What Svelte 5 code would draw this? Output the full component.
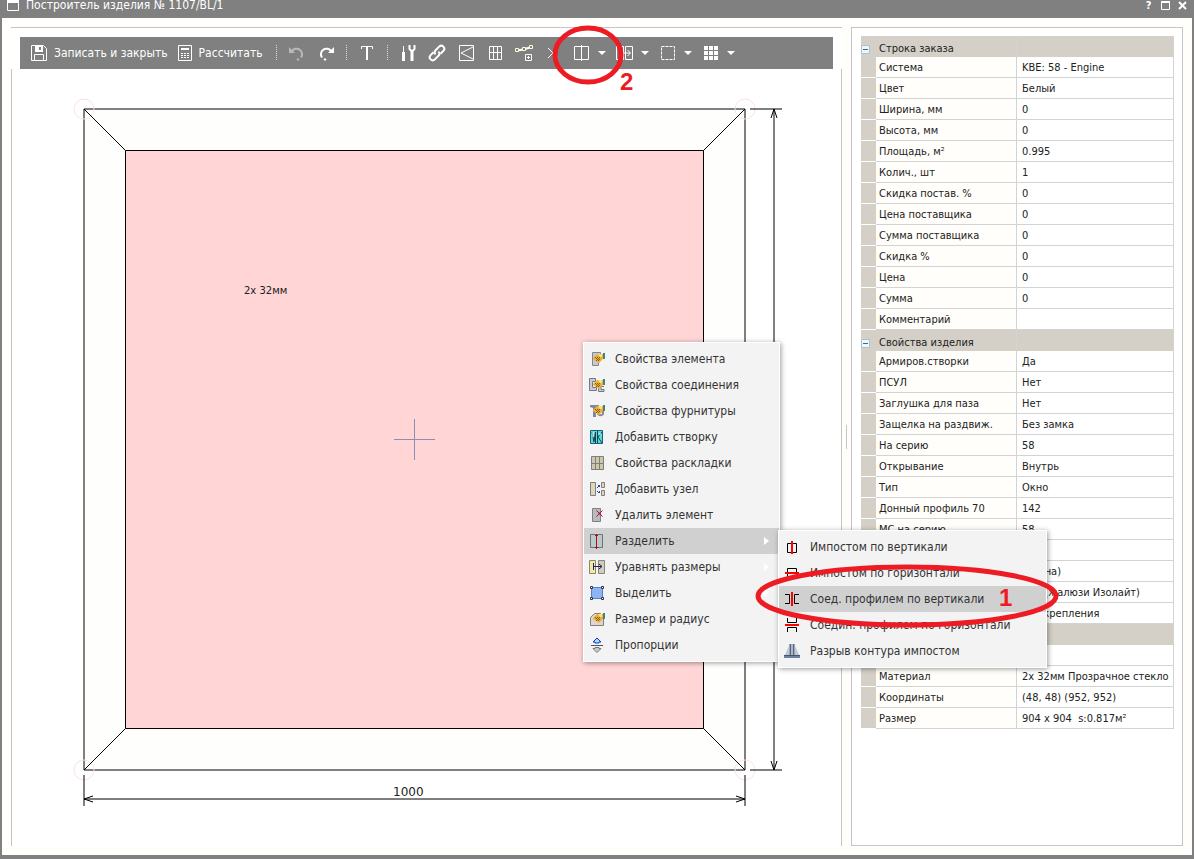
<script>
  const sections = [
    {
      title: 'Строка заказа',
      rows: [
        ['Система', 'KBE: 58 - Engine'],
        ['Цвет', 'Белый'],
        ['Ширина, мм', '0'],
        ['Высота, мм', '0'],
        ['Площадь, м²', '0.995'],
        ['Колич., шт', '1'],
        ['Скидка постав. %', '0'],
        ['Цена поставщика', '0'],
        ['Сумма поставщика', '0'],
        ['Скидка %', '0'],
        ['Цена', '0'],
        ['Сумма', '0'],
        ['Комментарий', '']
      ]
    },
    {
      title: 'Свойства изделия',
      rows: [
        ['Армиров.створки', 'Да'],
        ['ПСУЛ', 'Нет'],
        ['Заглушка для паза', 'Нет'],
        ['Защелка на раздвиж.', 'Без замка'],
        ['На серию', '58'],
        ['Открывание', 'Внутрь'],
        ['Тип', 'Окно'],
        ['Донный профиль 70', '142'],
        ['МС на серию', '58'],
        ['', ''],
        ['', '(Стена)'],
        ['', 'Нет (жалюзи Изолайт)'],
        ['', 'Без крепления']
      ]
    },
    {
      title: '',
      rows: [
        ['', ''],
        ['Материал', '2х 32мм Прозрачное стекло'],
        ['Координаты', '(48, 48) (952, 952)'],
        ['Размер', '904 x 904  s:0.817м²']
      ]
    }
  ];

  const menu = [
    { icon: 'element', label: 'Свойства элемента' },
    { icon: 'joint', label: 'Свойства соединения' },
    { icon: 'hardware', label: 'Свойства фурнитуры' },
    { icon: 'sash', label: 'Добавить створку' },
    { icon: 'layout', label: 'Свойства раскладки' },
    { icon: 'node', label: 'Добавить узел' },
    { icon: 'remove', label: 'Удалить элемент' },
    { icon: 'split', label: 'Разделить', sub: true, active: true },
    { icon: 'equal', label: 'Уравнять размеры', sub: true },
    { icon: 'select', label: 'Выделить', sub: true },
    { icon: 'radius', label: 'Размер и радиус' },
    { icon: 'ratio', label: 'Пропорции' }
  ];

  const submenu = [
    { icon: 'impV', label: 'Импостом по вертикали' },
    { icon: 'impH', label: 'Импостом по горизонтали' },
    { icon: 'profV', label: 'Соед. профилем по вертикали', active: true },
    { icon: 'profH', label: 'Соедин. профилем по горизонтали' },
    { icon: 'break', label: 'Разрыв контура импостом' }
  ];

  const tools = ['tools', 'link', 'flap', 'grid', 'nodes', 'cross'];
  const dropdowns = ['halves', 'equalize', 'marquee', 'tiles'];
  const names = {
    tools: 'Фурнитура', link: 'Соединение', flap: 'Створка', grid: 'Раскладка', nodes: 'Узел', cross: 'Удалить',
    halves: 'Разделить', equalize: 'Уравнять', marquee: 'Выделить', tiles: 'Сетка'
  };
</script>

{#snippet hand()}
  <path d="M4 7l4-4h6v5l-4 4-6-4z" fill="#e9b13c" />
  <path d="M6 6h1v1H6zM8 6h1v1H8zM7 7h1v1H7zM9 7h1v1H9zM8 8h1v1H8zM10 8h1v1h-1zM7 9h1v1H7zM9 9h1v1H9zM10 6h1v1h-1z" fill="#8a5c10" />
  <path d="M9 3h4v3h-2z" fill="#fbe27a" />
  <path d="M14 2h2v6h-2z" fill="#3d8580" />
{/snippet}

{#snippet toolIcon(name)}
  <svg width="20" height="18" viewBox="0 0 20 18" fill="none" stroke="#fff" aria-hidden="true">
    {#if name === 'tools'}
      <path d="M5.500 2v7" stroke-width="1" />
      <path d="M5.500 8v9" stroke-width="3" />
      <path d="M14 7v10" stroke-width="3" />
      <path d="M11.500 1v4l2 2h1l2-2V1" stroke-width="2" />
    {:else if name === 'link'}
      <g transform="rotate(-45 10 9)" stroke-width="2">
        <path d="M8 6H4a3 3 0 0 0 0 6h5a3 3 0 0 0 3-3" />
        <path d="M12 12h4a3 3 0 0 0 0-6h-5a3 3 0 0 0-3 3" />
      </g>
    {:else if name === 'flap'}
      <path d="M3.500 1.500h14v15h-14zM17 3L5 9l12 6" />
    {:else if name === 'grid'}
      <path d="M4.500 2.500h12v13h-12zM8.500 3v12M12.500 3v12M5 8.500h11" />
    {:else if name === 'nodes'}
      <path d="M3 6.500l6-1 7-2" stroke-width="2" />
      <path d="M1.500 4.500h3v3h-3zM8.500 3.500h3v3h-3zM15.500 1.500h3v3h-3z" fill="#808080" stroke="#fffbd0" />
      <path d="M11.500 10.500h6v6h-6zM14.500 12v3M13 13.500h3" />
    {:else if name === 'cross'}
      <path d="M5 4l10 10M15 4L5 14" stroke-width="1" />
    {:else if name === 'halves'}
      <path d="M2.500 2.500h14v13h-14zM9.500 1v16" />
    {:else if name === 'equalize'}
      <path d="M1.500 2.500h7v13h-7zM10.500 2.500h7v13h-7zM4 9h11M12.500 6l3 3-3 3" />
    {:else if name === 'marquee'}
      <rect x="3.500" y="2.500" width="13" height="13" stroke-dasharray="3 1" />
    {:else if name === 'tiles'}
      <path d="M3 2h4v4H3zM8 2h4v4H8zM13 2h4v4h-4zM3 7h4v4H3zM8 7h4v4H8zM13 7h4v4h-4zM3 12h4v4H3zM8 12h4v4H8zM13 12h4v4h-4z" fill="#fff" stroke="none" />
    {/if}
  </svg>
{/snippet}

{#snippet menuIcon(name)}
  <svg width="16" height="16" viewBox="0 0 16 16" fill="none" aria-hidden="true">
    {#if name === 'element'}
      <path d="M3.500 1.500h8v4h-2v9h-6z" fill="#c6c8cc" stroke="#84868c" />
      {@render hand()}
    {:else if name === 'joint'}
      <path d="M6.500 4.500V1.500H.500v12h7v-3H3.500v-6z" fill="#c9cad4" stroke="#74768a" />
      <path d="M15 9.500H9.500v5H15v-2h-3v-3" fill="#c9cad4" stroke="#74768a" />
      {@render hand()}
    {:else if name === 'hardware'}
      <path d="M1 2h9v3H7v9H4V5L1 4z" fill="#85859b" />
      <path d="M9 8v3a3 3 0 0 0 5 0V8" stroke="#85859b" stroke-width="2" />
      {@render hand()}
    {:else if name === 'sash'}
      <path d="M1.500 1.500h12v13h-12z" fill="#62d5dc" stroke="#17616e" />
      <path d="M3 3l2 10L6.500 3v11M8.500 2v12M13 3L9 8l4 6" stroke="#0c4553" />
      <path d="M4 3v5M11 4v2" stroke="#fff" />
    {:else if name === 'layout'}
      <path d="M2.500 1.500h12v13h-12z" fill="#cfc6ae" stroke="#7f7e78" />
      <path d="M6.500 2v12M10.500 2v12M3 8.500h11" stroke="#7f7e78" />
    {:else if name === 'node'}
      <path d="M1.500 1.500h5v13h-5zM12.500 1.500h3v5h-3zM12.500 9.500h3v5h-3z" fill="#ddd5c0" stroke="#827f78" />
      <path d="M9 4h2v2H9zM8 6h1v1H8zM8 10h1v1H8zM9 11h2v1H9zM10 10h1v1h-1z" fill="#1b4bb8" />
    {:else if name === 'remove'}
      <path d="M3.500 1.500h8v13h-8z" fill="#b9babd" stroke="#7f8185" />
      <path d="M7.500 3.500l6 6M13.500 3.500l-6 6" stroke="#b80d43" stroke-width="1" />
      <path d="M9.500 5.500h2v2h-2z" fill="#b80d43" />
    {:else if name === 'split'}
      <path d="M1.500 1.500h12v13h-12z" fill="#b8caca" stroke="#677674" />
      <path d="M7.500 1v15M6 2.500h3M6 14.500h3" stroke="#c40016" />
    {:else if name === 'equal'}
      <path d="M.500 1.500h6v13h-6z" fill="#f4e7a0" stroke="#8b8574" />
      <path d="M9.500 1.500h6v13h-6z" fill="#d3cdbd" stroke="#8b8574" />
      <path d="M4.500 4v7M5 7.500h8M10 5l3 2.500L10 10" stroke="#1e2172" />
    {:else if name === 'select'}
      <path d="M2.500 2.500h11v11h-11z" fill="#8db5f2" stroke="#5580cd" />
      <path d="M1.500 1.500h2v2h-2zM12.500 1.500h2v2h-2zM1.500 12.500h2v2h-2zM12.500 12.500h2v2h-2z" fill="#fff" stroke="#333" />
    {:else if name === 'radius'}
      <path d="M1.500 14.500v-8l4-4h6l3 3v9z" fill="#ddd6d0" stroke="#857f7c" />
      {@render hand()}
    {:else if name === 'ratio'}
      <path d="M8 1l4 4h-2v1H6V5H4z" fill="#a7dcff" stroke="#0b3ac9" />
      <path d="M2 8.500h12" stroke="#555" />
      <path d="M6 10.500h4v1h2l-4 4-4-4h2z" fill="#ccc" stroke="#777" />
    {:else if name === 'impV'}
      <path d="M3.500 4.500h9v9h-9z" stroke="#000" />
      <path d="M8 2v13" stroke="#f00" stroke-width="2" />
    {:else if name === 'impH'}
      <path d="M3.500 3.500h9v9h-9z" stroke="#000" />
      <path d="M1 8h14" stroke="#f00" stroke-width="2" />
    {:else if name === 'profV'}
      <path d="M1 3.500h4.500v9H1M15 3.500h-4.500v9H15" stroke="#000" />
      <path d="M8 1v14" stroke="#f00" stroke-width="2" />
    {:else if name === 'profH'}
      <path d="M3.500 1v4.500h9V1M3.500 15v-4.500h9V15" stroke="#000" />
      <path d="M1 8h14" stroke="#f00" stroke-width="2" />
    {:else if name === 'break'}
      <path d="M5 3v9H1zM11 3v9h4z" fill="#bac6d6" />
      <path d="M6.500 1v12M9.500 1v12" stroke="#53647e" stroke-width="2" />
      <path d="M8 1v12" stroke="#bac6d6" />
      <path d="M0 13.500h16" stroke="#6d7fa5" stroke-width="3" />
      <path d="M0 12.500h16" stroke="#46546f" />
    {/if}
  </svg>
{/snippet}

{#snippet menuList(items, label)}
  <ul class="menu-list" role="menu" aria-label={label}>
    {#each items as item}
      <li role="none">
        <button class="menu-item" class:active={item.active} role="menuitem">
          {@render menuIcon(item.icon)}
          <span>{item.label}</span>
          {#if item.sub}
            <svg class="more" width="5" height="8" viewBox="0 0 5 8" aria-hidden="true"><path d="M0 0l5 4-5 4z" fill="#fff" /></svg>
          {/if}
        </button>
      </li>
    {/each}
  </ul>
{/snippet}

<div class="window">
  <header class="titlebar">
    <svg width="12" height="11" viewBox="0 0 12 11" aria-hidden="true">
      <path d="M.500 0v10.500h11V0" fill="none" stroke="#fff" /><path d="M0 0h12v3H0z" fill="#fff" />
    </svg>
    <h1>Построитель изделия № 1107/BL/1</h1>
    <button class="win" aria-label="Справка">?</button>
    <button class="win" aria-label="Развернуть">
      <svg width="9" height="9" viewBox="0 0 9 9"><path d="M.500 1v7.500h8V1" fill="none" stroke="#fff" /><path d="M0 1h9" stroke="#fff" stroke-width="2" /></svg>
    </button>
    <button class="win" aria-label="Закрыть">
      <svg width="9" height="9" viewBox="0 0 9 9"><path d="M1 1l7 7M8 1L1 8" stroke="#fff" stroke-width="2" /></svg>
    </button>
  </header>

  <div class="body">
    <main class="editor">
      <div class="toolbar" role="toolbar" aria-label="Инструменты">
        <button class="text-tool">
          <svg width="16" height="16" viewBox="0 0 16 16" fill="none" stroke="#fff" aria-hidden="true">
            <path d="M.500.500h12l3 3v12H.500z" />
            <path d="M4 1h8v6H4z" fill="#fff" stroke="none" /><path d="M8 2h2v3H8z" fill="#808080" stroke="none" />
            <path d="M3.500 15V9.500h9V15" />
          </svg>
          <span>Записать и закрыть</span>
        </button>
        <button class="text-tool">
          <svg width="14" height="16" viewBox="0 0 14 16" fill="none" stroke="#fff" aria-hidden="true">
            <path d="M.500.500h13v15H.500z" />
            <path d="M3 4h8" stroke-width="2" />
            <path d="M3 8.500h2M6 8.500h2M9 8.500h2M3 10.500h2M6 10.500h2M9 10.500h2M3 12.500h2M6 12.500h2M9 12.500h2" />
          </svg>
          <span>Рассчитать</span>
        </button>
        <i class="sep"></i>
        <button class="tool dim" aria-label="Отменить">
          <svg width="16" height="16" viewBox="0 0 16 16" aria-hidden="true">
            <path d="M3 6a5.500 5.500 0 1 1 9 6.500" fill="none" stroke="#fff" stroke-width="2" />
            <path d="M0 2v6h6z" fill="#fff" /><path d="M9 13l1.500 1.500L9 16l-1.500-1.500z" fill="#fff" />
          </svg>
        </button>
        <button class="tool" aria-label="Повторить">
          <svg width="16" height="16" viewBox="0 0 16 16" aria-hidden="true">
            <path d="M13 6a5.500 5.500 0 1 0-9 6.500" fill="none" stroke="#fff" stroke-width="2" />
            <path d="M16 2v6h-6z" fill="#fff" /><path d="M7 13l1.500 1.500L7 16l-1.500-1.500z" fill="#fff" />
          </svg>
        </button>
        <i class="sep"></i>
        <button class="tool" aria-label="Текст">
          <svg width="12" height="14" viewBox="0 0 12 14" aria-hidden="true"><path d="M6 1v13" stroke="#fff" stroke-width="2" /><path d="M.500 3V.500h11V3" fill="none" stroke="#fff" /></svg>
        </button>
        <i class="sep"></i>
        {#each tools as t}
          <button class="tool" aria-label={names[t]}>{@render toolIcon(t)}</button>
        {/each}
        {#each dropdowns as t}
          <button class="tool drop" aria-label={names[t]}>
            {@render toolIcon(t)}
            <svg class="caret" width="8" height="4" viewBox="0 0 8 4" aria-hidden="true"><path d="M0 0h8L4 4z" fill="#fff" /></svg>
          </button>
        {/each}
      </div>

      <div class="canvas">
        <svg class="drawing" role="img" aria-label="Чертёж изделия">
          <g transform="translate(-12 -69)" fill="none" stroke="#000">
            <path d="M84 109h661v661H84z" fill="#fefefc" />
            <g stroke="#fde2e2">
              <circle cx="84" cy="109" r="10" /><circle cx="745" cy="109" r="10" />
              <circle cx="84" cy="770" r="10" /><circle cx="745" cy="770" r="10" />
            </g>
            <path d="M125.500 150.500h578v578h-578z" fill="#ffd5d5" />
            <path d="M84 109l41.500 41.500M745 109l-41.500 41.500M84 770l41.500-41.500M745 770l-41.500-41.500" />
            <path d="M750 109h32M750 770h32M774 109v661M84 775v31M745 775v31M84 799h661" />
            <path d="M771 118l3-9 3 9M771 761l3 9 3-9M93 796l-9 3 9 3M736 796l9 3-9 3" />
            <path d="M394 439.500h41M414.500 419v41" stroke="#8c8fb8" />
            <text x="393" y="796" font-size="12">1000</text>
            <text x="244" y="294" font-size="10">2х 32мм</text>
          </g>
        </svg>
      </div>
    </main>

    <div class="splitter"></div>

    <aside class="props">
      <table>
        <colgroup><col class="c-gutter" /><col class="c-name" /><col /></colgroup>
        {#each sections as s}
          <tbody>
            <tr class="head">
              <td class="gutter">
                {#if s.title}
                  <button class="toggle" aria-label="Свернуть"><svg width="9" height="9" viewBox="0 0 9 9"><path d="M.500.500h8v8h-8z" fill="#eef6f8" stroke="#a9c3cf" /><path d="M2 4.500h5" stroke="#3b6a86" /></svg></button>
                {/if}
              </td>
              <th scope="rowgroup">{s.title}</th>
              <td></td>
            </tr>
            {#each s.rows as [name, value]}
              <tr>
                <td class="gutter"></td>
                <th scope="row">{name}</th>
                <td class="value">{value}</td>
              </tr>
            {/each}
          </tbody>
        {/each}
      </table>
    </aside>
  </div>

  <div class="popup main-menu">{@render menuList(menu, 'Элемент')}</div>
  <div class="popup sub-menu">{@render menuList(submenu, 'Разделить')}</div>

  <svg class="marks" aria-hidden="true">
    <g fill="none" stroke="#ed1c24" stroke-width="5">
      <ellipse cx="588" cy="55" rx="33" ry="27" />
      <ellipse cx="907" cy="596" rx="149" ry="29" />
    </g>
    <text x="620" y="90">2</text>
    <text x="999" y="606">1</text>
  </svg>
</div>

<style>
  :global(body) { margin: 0; }
  .window {
    position: relative;
    box-sizing: border-box;
    min-height: 100vh;
    display: flex;
    flex-direction: column;
    border: solid #808080;
    border-width: 0 2px 4px;
    background: #fffefa;
    color: #222;
    font-family: "DejaVu Sans Condensed", "Noto Sans", sans-serif;
    font-size: 11px;
  }
  button {
    font: inherit;
    color: inherit;
    border: 0;
    padding: 0;
    margin: 0;
    background: none;
    display: flex;
    align-items: center;
  }
  svg { display: block; flex: none; }

  .titlebar {
    height: 18px;
    background: #808080;
    color: #fff;
    display: flex;
    align-items: flex-start;
    padding: 0 1px 0 5px;
  }
  h1 {
    flex: 1;
    margin: 0 0 0 7px;
    font-size: 12px;
    line-height: 10px;
    font-weight: 400;
  }
  .win {
    width: 17px;
    height: 11px;
    justify-content: center;
    font-weight: 700;
  }

  .body {
    flex: 1;
    display: flex;
    padding: 9px;
  }
  .editor {
    flex: 1;
    min-width: 0;
    display: flex;
    flex-direction: column;
    padding-top: 9px;
    border-top: 1px solid #c5c5c8;
    background: #fff;
  }
  .toolbar {
    height: 32px;
    margin: 0 9px;
    padding-left: 6px;
    background: #808080;
    color: #fff;
    display: flex;
    align-items: stretch;
  }
  .text-tool {
    gap: 7px;
    padding: 0 5px;
    font-size: 12px;
    white-space: nowrap;
  }
  .sep {
    width: 12px;
    height: 16px;
    align-self: center;
    background: repeating-linear-gradient(#ddd 0 1px, transparent 1px 2px) center / 1px 100% no-repeat;
  }
  .text-tool + .sep { margin-left: 3px; }
  .tool {
    width: 29px;
    justify-content: center;
  }
  .tool.drop {
    width: 43px;
    justify-content: flex-start;
    gap: 6px;
    padding-left: 4px;
    box-sizing: border-box;
  }
  .dim { opacity: 0.45; }
  .canvas {
    flex: 1;
    display: flex;
    border: solid #c5c5c8;
    border-width: 0 1px;
  }
  .drawing {
    width: 100%;
    flex: 1;
  }
  .drawing text {
    font-family: "DejaVu Sans", sans-serif;
    fill: #222;
    stroke: none;
  }

  .splitter {
    width: 9px;
    height: 24px;
    align-self: center;
    background: linear-gradient(#c5c5c8, #c5c5c8) center / 1px 100% no-repeat;
  }
  .props {
    width: 332px;
    box-sizing: border-box;
    border: 1px solid #c5c5c8;
    padding: 8px 8px 8px 9px;
    background: #fff;
  }
  table {
    width: 100%;
    table-layout: fixed;
    border-spacing: 0;
  }
  .c-gutter { width: 15px; }
  .c-name { width: 141px; }
  td, th {
    box-sizing: border-box;
    height: 21px;
    padding: 2px 0 0;
    line-height: 14px;
    font-weight: 400;
    text-align: left;
    white-space: pre;
    border-bottom: 1px solid #d3d3d3;
    border-right: 1px solid #d3d3d3;
  }
  th { padding-left: 3px; background: #fffefa; }
  .value { padding-left: 5px; }
  .gutter {
    white-space: normal;
    background: #d4d0c8;
    border-right: 0;
    border-bottom-color: #fff;
  }
  .head td, .head th { background: #d4d0c8; border-bottom-color: #d4d0c8; }
  .head th, .head .gutter { padding-top: 6px; }

  .popup {
    position: absolute;
    box-sizing: border-box;
    padding: 3px 0;
    background: #f3f3f3;
    border: 1px solid #fff;
    box-shadow: 1px 1px 5px rgba(0, 0, 0, 0.4);
    font-size: 12px;
    color: #333;
  }
  .main-menu { left: 581px; top: 342px; width: 197px; }
  .sub-menu { left: 776px; top: 530px; width: 269px; }
  .menu-list {
    list-style: none;
    margin: 0;
    padding: 0;
  }
  .menu-item {
    width: 100%;
    height: 26px;
    padding: 0 10px 0 5px;
    gap: 10px;
    white-space: nowrap;
  }
  .menu-item.active { background: #d0d0d0; }
  .more { margin-left: auto; }

  .marks {
    position: absolute;
    left: -2px;
    top: 0;
    width: calc(100% + 2px);
    height: 100%;
    pointer-events: none;
  }
  .marks text {
    font: 700 24px "Liberation Sans", sans-serif;
    fill: #ed1c24;
  }
</style>
